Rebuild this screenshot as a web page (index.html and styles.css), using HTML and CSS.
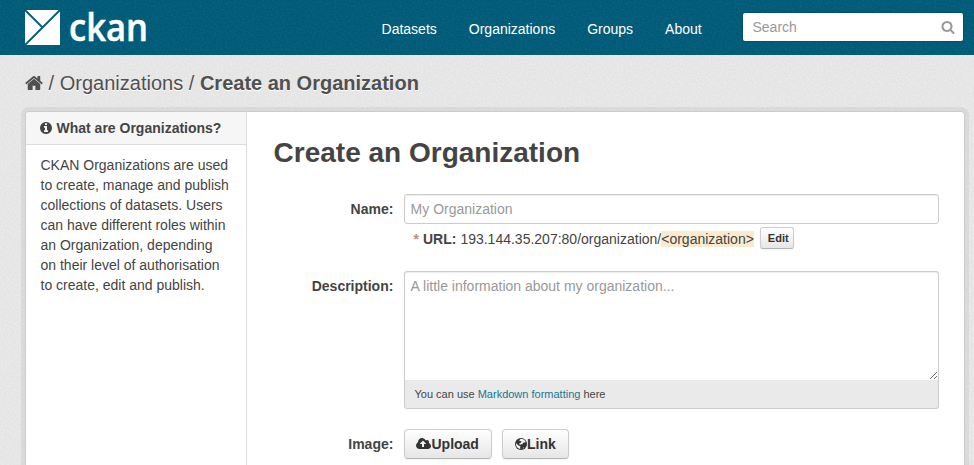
FILE: index.html
```html
<!DOCTYPE html>
<html lang="en">
<head>
<meta charset="utf-8">
<title>Create an Organization - CKAN</title>
<link rel="stylesheet" href="styles.css">
</head>
<body>
<header class="masthead">
  <a class="logo" aria-label="ckan">
    <svg width="124" height="38" viewBox="0 0 124 38">
      <path fill="#fff" d="M0 0H35V35H0z"/>
      <path fill="none" stroke="#005d7a" stroke-width="1.8" d="M0 35L35 0M0 0L17.5 17.5"/>
      <text class="logo-text" x="44" y="31" textLength="79" lengthAdjust="spacingAndGlyphs">ckan</text>
    </svg>
  </a>
  <nav class="nav"><a>Datasets</a><a>Organizations</a><a>Groups</a><a>About</a></nav>
  <form class="search">
    <input type="text" placeholder="Search">
    <svg class="search-icon" viewBox="64 128 1664 1664"><path d="M1216 832q0-185-131.5-316.5t-316.5-131.5-316.5 131.5-131.5 316.5 131.5 316.5 316.5 131.5 316.5-131.5 131.5-316.5zm512 832q0 52-38 90t-90 38q-54 0-90-38l-343-342q-179 124-399 124-143 0-273.5-55.5t-225-150-150-225-55.5-273.5 55.5-273.5 150-225 225-150 273.5-55.5 273.5 55.5 225 150 150 225 55.5 273.5q0 220-124 399l343 343q37 37 37 90z"/></svg>
  </form>
</header>
<div class="breadcrumb">
  <svg class="home" viewBox="64 0 1664 1792"><path d="M1472 992v480q0 26-19 45t-45 19h-384v-384h-256v384h-384q-26 0-45-19t-19-45v-480q0-1 .5-3t.5-3l575-474 575 474q1 2 1 6zm223-69l-62 74q-8 9-21 11h-3q-13 0-21-7l-692-577-692 577q-12 8-24 7-13-2-21-11l-62-74q-8-10-7-23.5t11-21.5l719-599q32-26 76-26t76 26l244 204v-195q0-14 9-23t23-9h192q14 0 23 9t9 23v408l219 182q10 8 11 21.5t-7 23.5z"/></svg>
  <span>/</span><a>Organizations</a><span>/</span><strong>Create an Organization</strong>
</div>
<div class="wrapper">
  <aside class="sidebar">
    <h2 class="module-heading"><svg class="info" viewBox="128 128 1536 1536"><path d="M1152 1376v-160q0-14-9-23t-23-9h-96v-512q0-14-9-23t-23-9h-320q-14 0-23 9t-9 23v160q0 14 9 23t23 9h96v320h-96q-14 0-23 9t-9 23v160q0 14 9 23t23 9h448q14 0 23-9t9-23zm-128-896v-160q0-14-9-23t-23-9h-192q-14 0-23 9t-9 23v160q0 14 9 23t23 9h192q14 0 23-9t9-23zm640 416q0 209-103 385.5t-279.5 279.5-385.5 103-385.5-103-279.5-279.5-103-385.5 103-385.5 279.5-279.5 385.5-103 385.5 103 279.5 279.5 103 385.5z"/></svg>What are Organizations?</h2>
    <p class="module-content">CKAN Organizations are used to create, manage and publish collections of datasets. Users can have different roles within an Organization, depending on their level of authorisation to create, edit and publish.</p>
  </aside>
  <main class="primary">
    <h1>Create an Organization</h1>
    <div class="row">
      <label for="name">Name:</label>
      <div class="controls">
        <input id="name" class="field" type="text" placeholder="My Organization">
        <div class="slug"><strong class="required">*</strong><strong>URL:</strong><span class="slug-url">193.144.35.207:80/organization/<span class="slug-value">&lt;organization&gt;</span></span><button class="btn btn-small" type="button">Edit</button></div>
      </div>
    </div>
    <div class="row row-description">
      <label for="description">Description:</label>
      <div class="controls editor">
        <textarea id="description" placeholder="A little information about my organization..."></textarea>
        <div class="editor-info">You can use <a>Markdown formatting</a> here</div>
      </div>
    </div>
    <div class="row row-image">
      <label>Image:</label>
      <div class="controls buttons">
        <button class="btn" type="button"><svg class="cloud" viewBox="-64 128 1920 1536"><path d="M1216 864q0-14-9-23l-352-352q-9-9-23-9t-23 9l-351 351q-10 12-10 24 0 14 9 23t23 9h224v352q0 13 9.5 22.5t22.5 9.5h192q13 0 22.5-9.5t9.5-22.5v-352h224q13 0 22.5-9.5t9.5-22.5zm640 288q0 159-112.5 271.5t-271.5 112.5h-1088q-185 0-316.5-131.5t-131.5-316.5q0-130 70-240t188-165q-2-30-2-43 0-212 150-362t362-150q156 0 285.5 87t188.5 231q71-62 166-62 106 0 181 75t75 181q0 76-41 138 130 31 213.5 135.5t83.5 238.5z"/></svg>Upload</button>
        <button class="btn" type="button"><svg class="globe" viewBox="0 0 12 12"><circle cx="6" cy="6" r="6"/><path class="land" d="M5.3 1.1L7.8 1 9.3 2 10.8 3.9 9.8 4.5 8.6 4.4 7.7 5.4 7.3 6.6 6.3 6 5.5 6.7 4.4 6.6 4.2 5.5 5.3 4.9 6.2 4.2 6.5 3.3 5.5 2.9 4.8 3.2 4.4 2.3zM1.1 5.2L2.4 6.5 3.8 7.8 5.1 8 5.5 8.6 5 9.7 5.4 11Q1.6 10.5.9 6.6zM8.2 9.7L9.2 9.1 8.9 10.1 7.8 10.7z"/></svg>Link</button>
      </div>
    </div>
  </main>
</div>
</body>
</html>
```
FILE: styles.css
```css
* { box-sizing: border-box; }

:root {
  --grain: url("data:image/svg+xml,%3Csvg xmlns='http://www.w3.org/2000/svg' width='100' height='100'%3E%3Cfilter id='n' x='0' y='0' width='100%25' height='100%25'%3E%3CfeTurbulence type='fractalNoise' baseFrequency='.55' numOctaves='2' stitchTiles='stitch'/%3E%3CfeColorMatrix values='0 0 0 0 1 0 0 0 0 1 0 0 0 0 1 1.6 0 0 0 -.6'/%3E%3C/filter%3E%3Crect width='100' height='100' filter='url(%23n)' opacity='.38'/%3E%3C/svg%3E");
  --grain-dark: url("data:image/svg+xml,%3Csvg xmlns='http://www.w3.org/2000/svg' width='100' height='100'%3E%3Cfilter id='n' x='0' y='0' width='100%25' height='100%25'%3E%3CfeTurbulence type='fractalNoise' baseFrequency='.55' numOctaves='2' stitchTiles='stitch'/%3E%3CfeColorMatrix values='0 0 0 0 .3 0 0 0 0 .7 0 0 0 0 .8 1.6 0 0 0 -.6'/%3E%3C/filter%3E%3Crect width='100' height='100' filter='url(%23n)' opacity='.09'/%3E%3C/svg%3E");
}

html, body { height: 100%; }

body {
  display: flex;
  flex-direction: column;
  margin: 0;
  overflow: hidden;
  background: #e4e4e4 var(--grain);
  color: #444;
  font: 14px/20px "Liberation Sans", Arial, sans-serif;
}

input, textarea, button { font: inherit; }
svg { fill: currentColor; }

.masthead {
  display: flex;
  flex: none;
  align-items: flex-start;
  height: 55px;
  padding: 0 11px 0 25px;
  background: #005a77 var(--grain-dark);
  color: #fff;
}
.logo { display: block; margin-top: 10px; height: 38px; }
.logo svg { display: block; overflow: visible; }
.logo-text { fill: #fff; font: 600 37px "Open Sans", sans-serif; stroke: #fff; stroke-width: .5px; }
.nav { display: flex; gap: 32px; margin: 19px 41.3px 0 auto; }

.search { position: relative; width: 220px; margin-top: 13px; }
.search input {
  display: block;
  width: 220px;
  height: 28px;
  padding: 4px 30px 4px 9.5px;
  border: 0;
  border-radius: 2px;
  background: #fff;
  box-shadow: 0 0 1px 1px rgba(0, 0, 0, .12);
}
.search-icon { position: absolute; top: 8px; right: 8px; width: 14px; height: 13px; color: #999; }
::placeholder { color: #999; opacity: 1; }

.breadcrumb {
  display: flex;
  flex: none;
  gap: 5.6px;
  height: 57px;
  padding: 18px 25px 0;
  color: #505050;
  font-size: 20px;
  text-shadow: 0 1px 0 #fff;
}
.home { width: 18px; height: 20px; }

.wrapper {
  display: grid;
  flex: 1;
  grid-template-columns: 221px 1fr;
  min-height: 0;
  margin: -1px 9px 0 25px;
  border: 1px solid #ccc;
  border-bottom: 0;
  border-radius: 4px 4px 0 0;
  background: #fff;
  box-shadow: 0 0 0 4px rgba(0, 0, 0, .05);
}

.sidebar { border-right: 1px solid #ddd; }
.module-heading {
  display: flex;
  align-items: center;
  gap: 4.5px;
  height: 33px;
  margin: 0;
  padding: 0 14px;
  border-bottom: 1px solid #ddd;
  border-radius: 3px 0 0;
  background: #f6f6f6;
  font-size: 14px;
  line-height: 20px;
}
.info { width: 12px; height: 12px; }
.module-content { margin: 0; padding: 10px 16px 0 14.5px; }

.primary { padding: 23px 25px 0 26.6px; }
h1 { margin: 0 0 23px; font-size: 28px; line-height: 36px; }
.row { display: flex; gap: 10.6px; }
.row label { width: 119.8px; padding-top: 5px; text-align: right; font-weight: bold; }
.controls { flex: none; width: 535px; }
.field, textarea {
  display: block;
  width: 535px;
  padding: 4px 5.6px;
  border: 1px solid #ccc;
  border-radius: 3px;
  background: #fff;
  box-shadow: inset 0 1px 1px rgba(0, 0, 0, .075);
}
.field { height: 30px; }
.slug { display: flex; gap: 4px; height: 29px; padding: 5px 0 0 9.5px; }
.required { color: #c6898b; }
.slug-value { background: #faebcf; }

.btn {
  display: inline-flex;
  align-items: center;
  height: 30px;
  padding: 0 12px;
  border: 1px solid #ccc;
  border-bottom-color: #b3b3b3;
  border-radius: 4px;
  background: linear-gradient(#fff, #e6e6e6);
  box-shadow: inset 0 1px 0 rgba(255, 255, 255, .2), 0 1px 2px rgba(0, 0, 0, .05);
  color: #333;
  font-weight: bold;
}
.btn-small { width: 34px; height: 22px; margin: -2px 0 0 2.5px; padding: 0 6.5px; border-radius: 3px; font-size: 11px; }

.row-description { margin-top: 18px; }
textarea { height: 109px; border-bottom: 0; border-radius: 3px 3px 0 0; resize: vertical; }
.editor-info {
  height: 29px;
  padding: 4px 9.5px;
  border: 1px solid #ccc;
  border-top: 0;
  border-radius: 0 0 3px 3px;
  background: #eaeaea;
  font-size: 11px;
}
.editor-info a { color: #187794; }
.row-image { margin-top: 20px; }
.buttons { display: flex; gap: 10px; }
.buttons .btn:first-child { width: 88px; padding: 0 11.5px; }
.buttons .btn:last-child { width: 67px; }
.cloud { width: 15px; height: 12px; }
.globe { width: 12px; height: 12px; }
.land { fill: #f3f3f3; }
```
